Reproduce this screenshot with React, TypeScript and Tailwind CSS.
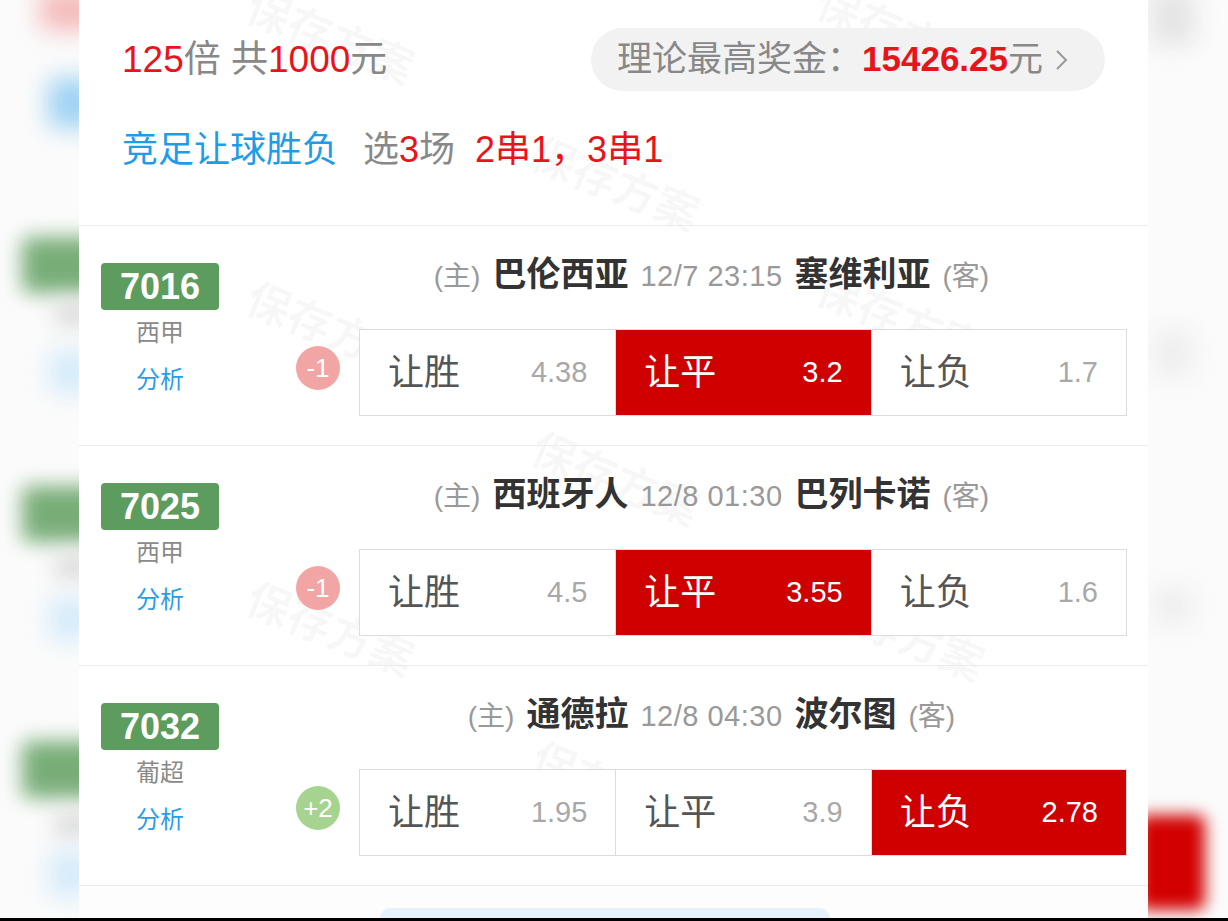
import React from "react";

type Match = {
  no: string;
  league: string;
  home: string;
  time: string;
  away: string;
  hc: string;
  odds: string[];
  pick: number;
};

const matches: Match[] = [
  { no: "7016", league: "西甲", home: "巴伦西亚", time: "12/7 23:15", away: "塞维利亚", hc: "-1", odds: ["4.38", "3.2", "1.7"], pick: 1 },
  { no: "7025", league: "西甲", home: "西班牙人", time: "12/8 01:30", away: "巴列卡诺", hc: "-1", odds: ["4.5", "3.55", "1.6"], pick: 1 },
  { no: "7032", league: "葡超", home: "通德拉", time: "12/8 04:30", away: "波尔图", hc: "+2", odds: ["1.95", "3.9", "2.78"], pick: 2 },
];

const labels = ["让胜", "让平", "让负"];

// watermark positions, relative to the card
const marks = [
  "left-[251px] top-[38px]",
  "left-[821px] top-[34px]",
  "left-[536px] top-[185px]",
  "left-[251px] top-[330px]",
  "left-[821px] top-[320px]",
  "left-[536px] top-[480px]",
  "left-[251px] top-[630px]",
  "left-[821px] top-[635px]",
  "left-[536px] top-[790px]",
];

function MatchRow({ m }: { m: Match }) {
  return (
    <div className="flex h-[220px] border-b border-[#ececec]">
      {/* left column */}
      <div className="flex w-[162px] flex-col items-center pt-[37px]">
        <div className="flex h-[47px] w-[118px] items-center justify-center rounded-[4px] bg-[#5c9c5e] text-[36px] font-bold leading-none text-white">
          {m.no}
        </div>
        <div className="mt-[7px] text-[24px] leading-[32px] text-[#8a8a8a]">{m.league}</div>
        <div className="mt-[15px] text-[24px] leading-[32px] text-[#2a9de6]">分析</div>
      </div>

      {/* right part */}
      <div className="flex flex-1 flex-col pr-[21px] pt-[23px]">
        <div className="flex h-[40px] items-baseline justify-center gap-[12px] pl-[55px] whitespace-nowrap">
          <span className="text-[28px] text-[#999]">(主)</span>
          <span className="text-[34px] font-bold text-[#333]">{m.home}</span>
          <span className="text-[29px] tracking-[0.5px] text-[#999]">{m.time}</span>
          <span className="text-[34px] font-bold text-[#333]">{m.away}</span>
          <span className="text-[28px] text-[#999]">(客)</span>
        </div>

        <div className="mt-[40px] flex items-start gap-[19px] pl-[55px]">
          <div
            className={`mt-[17px] flex h-[44px] w-[44px] items-center justify-center rounded-full text-[26px] leading-none text-white ${
              m.hc.startsWith("+") ? "bg-[#a6d38f]" : "bg-[#f2a5a5]"
            }`}
          >
            {m.hc}
          </div>
          <div className="grid h-[87px] flex-1 grid-cols-3 border border-[#dcdcdc] bg-white">
            {labels.map((label, i) => {
              const on = m.pick === i;
              return (
                <div
                  key={label}
                  className={`flex items-center justify-between px-[28px] ${i > 0 ? "border-l border-[#dcdcdc]" : ""} ${
                    on ? "bg-[#cf0000]" : ""
                  }`}
                >
                  <span className={`text-[36px] ${on ? "text-white" : "text-[#555]"}`}>{label}</span>
                  <span className={`text-[29px] ${on ? "text-white" : "text-[#a8a8a8]"}`}>{m.odds[i]}</span>
                </div>
              );
            })}
          </div>
        </div>
      </div>
    </div>
  );
}

export default function App() {
  return (
    <div className="flex h-[921px] w-[1228px] flex-col overflow-hidden bg-[#fbfbfb] font-['Liberation_Sans','Noto_Sans_CJK_SC',sans-serif]">
      <div className="flex flex-1 overflow-hidden">
        {/* blurred left edge */}
        <div className="flex w-[79px] flex-col overflow-hidden">
          <div className="ml-[40px] mt-[-10px] h-[40px] w-[60px] rounded-lg bg-[#f4b9b9] blur-[12px]" />
          <div className="ml-[48px] mt-[48px] h-[50px] w-[50px] rounded-lg bg-[#9fd2f3] blur-[12px]" />
          <div className="ml-[22px] mt-[109px] h-[56px] w-[80px] rounded-lg bg-[#78ad78] blur-[10px]" />
          <div className="ml-[55px] mt-[8px] h-[25px] w-[40px] rounded bg-[#dddddd] blur-[10px]" />
          <div className="ml-[50px] mt-[25px] h-[42px] w-[40px] rounded bg-[#d3eafa] blur-[12px]" />
          <div className="ml-[22px] mt-[93px] h-[56px] w-[80px] rounded-lg bg-[#78ad78] blur-[10px]" />
          <div className="ml-[55px] mt-[12px] h-[25px] w-[40px] rounded bg-[#dddddd] blur-[10px]" />
          <div className="ml-[50px] mt-[19px] h-[42px] w-[40px] rounded bg-[#d3eafa] blur-[12px]" />
          <div className="ml-[22px] mt-[101px] h-[57px] w-[80px] rounded-lg bg-[#78ad78] blur-[10px]" />
          <div className="ml-[55px] mt-[14px] h-[25px] w-[40px] rounded bg-[#dddddd] blur-[10px]" />
          <div className="ml-[50px] mt-[14px] h-[45px] w-[40px] rounded bg-[#d3eafa] blur-[12px]" />
        </div>

        {/* center */}
        <div className="flex w-[1069px] flex-col">
          <div className="relative bg-white">
            {marks.map((pos) => (
              <div
                key={pos}
                className={`pointer-events-none absolute ${pos} -translate-x-1/2 -translate-y-1/2 rotate-[22deg] whitespace-nowrap text-[44px] font-bold text-black/[0.035]`}
              >
                保存方案
              </div>
            ))}

            <div className="relative">
              {/* header */}
              <div className="border-b border-[#ececec] px-[43px] pb-[53px] pt-[28px]">
                <div className="flex items-center justify-between">
                  <div className="text-[37px] text-[#888]">
                    <span className="text-[#e8141b]">125</span>倍 共<span className="text-[#e8141b]">1000</span>元
                  </div>
                  <div className="flex h-[63px] w-[514px] items-center rounded-full bg-[#f2f2f2] pl-[26px] text-[35px] text-[#888]">
                    <span>理论最高奖金：</span>
                    <span className="font-bold text-[#e8141b]">15426.25</span>
                    <span>元</span>
                    <svg className="ml-[12px] h-[24px] w-[14px]" viewBox="0 0 14 24" fill="none" stroke="#9a9a9a" strokeWidth="2">
                      <polyline points="2,3 11,12 2,21" />
                    </svg>
                  </div>
                </div>
                <div className="mt-[37px] flex h-[44px] items-center text-[36px]">
                  <span className="text-[#1e9ce8]">竞足让球胜负</span>
                  <span className="ml-[25px] text-[#888]">
                    选<span className="text-[#e8141b]">3</span>场
                  </span>
                  <span className="ml-[20px] text-[#e8141b]">2串1，3串1</span>
                </div>
              </div>

              {matches.map((m) => (
                <MatchRow key={m.no} m={m} />
              ))}
            </div>
          </div>

          {/* next section peeking */}
          <div className="flex flex-1 items-end bg-[#fdfdfd] pl-[301px]">
            <div className="h-[10px] w-[450px] rounded-t-[20px] bg-[#e6f2fb]" />
          </div>
        </div>

        {/* blurred right edge */}
        <div className="flex w-[80px] flex-col overflow-hidden">
          <div className="ml-[2px] mt-[-10px] h-[55px] w-[45px] rounded-lg bg-[#e4e4e4] blur-[12px]" />
          <div className="ml-[5px] mt-[285px] h-[46px] w-[40px] rounded bg-[#eeeeee] blur-[12px]" />
          <div className="ml-[5px] mt-[212px] h-[36px] w-[40px] rounded bg-[#eeeeee] blur-[12px]" />
          <div className="ml-[-10px] mt-[191px] h-[95px] w-[67px] rounded-lg bg-[#d20000] blur-[8px]" />
        </div>
      </div>
      <div className="h-[3px] bg-black" />
    </div>
  );
}
